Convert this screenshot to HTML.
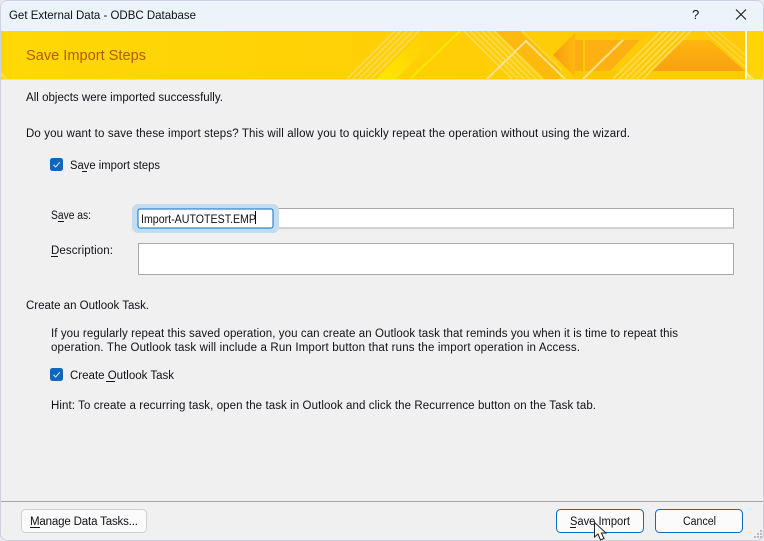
<!DOCTYPE html>
<html><head><meta charset="utf-8"><style>
html,body{margin:0;padding:0;background:#e9e9ee;overflow:hidden}
svg{display:block}
text{font-family:"Liberation Sans",sans-serif;font-size:11.5px;fill:#101018}
</style></head><body>
<svg width="764" height="541" viewBox="0 0 764 541" xmlns="http://www.w3.org/2000/svg">
<defs>
<linearGradient id="bg" x1="0" y1="0" x2="1" y2="0"><stop offset="0" stop-color="#ffd805"/><stop offset=".5" stop-color="#ffd006"/><stop offset="1" stop-color="#ffc908"/></linearGradient>
<linearGradient id="ar" x1="0" y1="0" x2="1" y2="0"><stop offset="0" stop-color="#f99a12"/><stop offset="1" stop-color="#feb90e"/></linearGradient>
<linearGradient id="tr" x1="0" y1="0" x2="0" y2="1"><stop offset="0" stop-color="#feb60e"/><stop offset="1" stop-color="#f9a013"/></linearGradient>
<linearGradient id="yb" gradientUnits="userSpaceOnUse" x1="380" y1="79" x2="425" y2="38"><stop offset="0" stop-color="#ffe600"/><stop offset="1" stop-color="#ffe600" stop-opacity="0"/></linearGradient>
<clipPath id="bn"><rect x="1" y="31" width="762" height="48"/></clipPath>
</defs>
<rect x=".5" y=".5" width="763" height="540" rx="7" fill="#f0f0f0" stroke="#cfd0e0"/>
<path d="M1 31V8Q1 1 8 1H756Q763 1 763 8V31Z" fill="#ebf4fa"/>
<g clip-path="url(#bn)">
<rect x="1" y="31" width="762" height="48" fill="url(#bg)"/>
<path d="M376 79H396L444 31H424Z" fill="url(#yb)"/>
<path d="M496 31H520L560 70V79H545Z" fill="#fdb90f"/>
<path d="M575 33H650L642 40H575ZM575 71H625L617 79H575Z" fill="#ffc708"/>
<path d="M553 55 575 33V77Z" fill="url(#ar)"/>
<rect x="575" y="40" width="8" height="31" fill="#fcae10"/>
<path d="M585 40H640L610 71H585Z" fill="#fdb011"/>
<path d="M652 71 683 40H710L745 71Z" fill="url(#tr)"/>
<g stroke="#ffdc60" stroke-width="1.600" fill="none" opacity=".9">
<path d="M347 79 395 31M353 79 401 31M359 79 407 31M365 79 413 31M371 79 419 31"/>
<path d="M464 31 512 79M470 31 518 79M476 31 524 79M482 31 530 79M488 31 536 79M494 31 542 79"/>
<path d="M613 79 661 31M619 79 667 31M625 79 673 31M631 79 679 31M637 79 685 31M643 79 691 31"/>
<path d="M705 31 745 67M711 31 745 61M717 31 745 55" opacity=".7"/>
<path d="M522 31 562 70" opacity=".6"/>
</g>
<path d="M410 79 460 31" stroke="#ffe600" stroke-width="2" fill="none"/>
<path d="M487 79 526 41 565 79" stroke="#ffe28a" stroke-width="2" fill="none"/>
<path d="M583 79 623 40" stroke="#ffe08a" stroke-width="2" fill="none"/>
<rect x="747" y="31" width="16" height="48" fill="#ffd505"/>
<path d="M747 72 754 79H750L747 76Z" fill="#ffe878"/>
<rect x="745" y="31" width="2" height="48" fill="#fff9e0"/>
<path d="M1 72 8 79H4L1 76Z" fill="#ffe040"/>
</g>
<rect x="1" y="79" width="762" height="1" fill="#dcdce0"/>

<text x="9" y="19" textLength="187" lengthAdjust="spacingAndGlyphs" style="font-size:12px">Get External Data - ODBC Database</text>
<text x="692" y="19" textLength="8" style="font-size:13px">?</text>
<path d="M736 9.500 746 19.500M746 9.500 736 19.500" stroke="#1a1a1a" stroke-width="1.100" fill="none"/>
<text x="26" y="60" textLength="120" lengthAdjust="spacingAndGlyphs" style="font-size:15px;fill:#b55a00">Save Import Steps</text>

<text x="26" y="101" textLength="197">All objects were imported successfully.</text>
<text x="26" y="137" textLength="604">Do you want to save these import steps? This will allow you to quickly repeat the operation without using the wizard.</text>

<rect x="50" y="158" width="13" height="13" rx="2.500" fill="#0f66bd"/>
<path d="M53.500 164.800 55.700 167 59.800 162.200" stroke="#d5e6f6" stroke-width="1.100" fill="none"/>
<text x="70" y="169" textLength="90" lengthAdjust="spacingAndGlyphs">Save import steps</text>
<rect x="82" y="171" width="5" height="1" fill="#16161e"/>

<text x="51" y="219" textLength="40" lengthAdjust="spacingAndGlyphs">Save as:</text>
<rect x="58" y="221" width="6" height="1" fill="#16161e"/>
<rect x="138.500" y="208.500" width="595" height="19.500" fill="#fff" stroke="#a9a9a9"/>
<rect x="132" y="204" width="147" height="29" rx="6" fill="#c3dcf0"/>
<rect x="138" y="209" width="135" height="19" rx="2" fill="#fff" stroke="#0f6cbd"/>
<text x="141" y="223" textLength="115" lengthAdjust="spacingAndGlyphs">Import-AUTOTEST.EMP</text>
<rect x="255" y="211" width="1" height="13" fill="#000"/>

<text x="51" y="254" textLength="62">Description:</text>
<rect x="51" y="256" width="7" height="1" fill="#16161e"/>
<rect x="138.500" y="243.500" width="595" height="31" fill="#fff" stroke="#a9a9a9"/>

<text x="26" y="309" textLength="123">Create an Outlook Task.</text>
<text x="51" y="337" textLength="627">If you regularly repeat this saved operation, you can create an Outlook task that reminds you when it is time to repeat this</text>
<text x="51" y="351" textLength="529">operation. The Outlook task will include a Run Import button that runs the import operation in Access.</text>

<rect x="50" y="368" width="13" height="13" rx="2.500" fill="#0f66bd"/>
<path d="M53.500 374.800 55.700 377 59.800 372.200" stroke="#d5e6f6" stroke-width="1.100" fill="none"/>
<text x="70" y="379" textLength="104">Create Outlook Task</text>
<rect x="106" y="381" width="9" height="1" fill="#16161e"/>

<text x="51" y="409" textLength="545">Hint: To create a recurring task, open the task in Outlook and click the Recurrence button on the Task tab.</text>

<rect x="1" y="501" width="762" height="1" fill="#a5a5a8"/>

<rect x="21.500" y="509.500" width="125" height="23" rx="4" fill="#fbfbfb" stroke="#cfcfd2"/>
<text x="30" y="525" textLength="108">Manage Data Tasks...</text>
<rect x="30" y="527" width="10" height="1" fill="#16161e"/>

<rect x="556.500" y="509.500" width="87" height="23" rx="4" fill="#fbfbfb" stroke="#0f6cbd"/>
<text x="570" y="525" textLength="60" lengthAdjust="spacingAndGlyphs">Save Import</text>
<rect x="570" y="527" width="6" height="1" fill="#16161e"/>

<rect x="655.500" y="509.500" width="87" height="23" rx="4" fill="#fbfbfb" stroke="#0f6cbd"/>
<text x="683" y="525" textLength="33" lengthAdjust="spacingAndGlyphs">Cancel</text>

<path d="M594.500 522.500V537L598 534 600.500 540 604 538.500 601.300 533H606Z" fill="#fff" stroke="#222" stroke-width="1"/>

<g fill="#b9b9bd">
<rect x="760" y="530" width="2" height="2"/>
<rect x="757" y="533" width="2" height="2"/><rect x="760" y="533" width="2" height="2"/>
<rect x="754" y="536" width="2" height="2"/><rect x="757" y="536" width="2" height="2"/><rect x="760" y="536" width="2" height="2"/>
</g>
</svg>
</body></html>
